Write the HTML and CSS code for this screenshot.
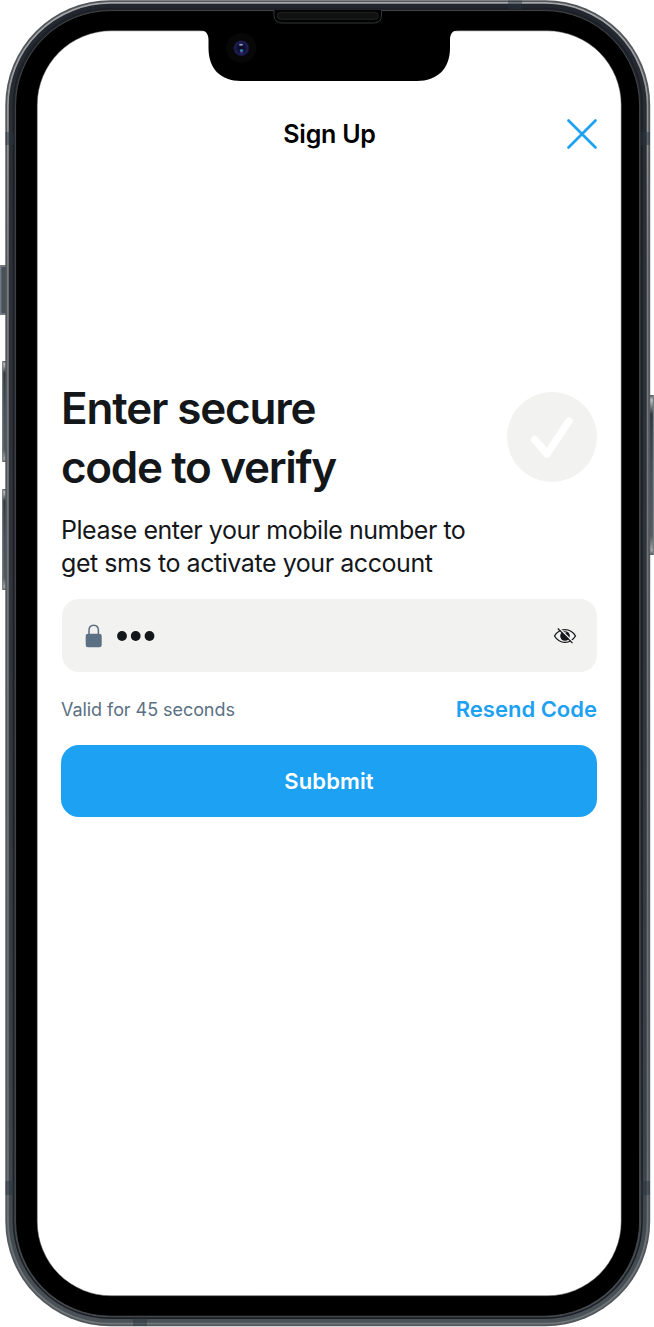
FILE: index.html
```html
<!DOCTYPE html>
<html lang="en">
<head>
<meta charset="utf-8">
<title>Sign Up</title>
<link rel="stylesheet" href="styles.css">
</head>
<body>
<div class="phone">
  <svg class="frame" width="654" height="1327" viewBox="0 0 654 1327" aria-hidden="true">
    <defs>
      <linearGradient id="metal" x1="0" y1="0" x2="0" y2="1">
        <stop offset="0" stop-color="#22262f"/><stop offset=".1" stop-color="#292e35"/><stop offset=".5" stop-color="#30343b"/><stop offset=".88" stop-color="#3c4349"/><stop offset="1" stop-color="#4b5358"/>
      </linearGradient>
      <linearGradient id="shine" x1="0" y1="0" x2="0" y2="1">
        <stop offset="0" stop-color="#a4a8a9"/><stop offset=".1" stop-color="#8f9395"/><stop offset=".2" stop-color="#777b80"/><stop offset=".85" stop-color="#666d73"/><stop offset="1" stop-color="#70777b"/>
      </linearGradient>
      <linearGradient id="key" x1="0" y1="0" x2="0" y2="1">
        <stop offset="0" stop-color="#56595c"/><stop offset=".03" stop-color="#c2c4c5"/><stop offset=".12" stop-color="#30363d"/><stop offset=".5" stop-color="#46515c"/><stop offset=".88" stop-color="#55595e"/><stop offset=".97" stop-color="#a3a5a7"/><stop offset="1" stop-color="#56595c"/>
      </linearGradient>
      <radialGradient id="lens">
        <stop offset="0" stop-color="#090a20"/><stop offset=".55" stop-color="#11133a"/><stop offset=".78" stop-color="#20205a"/><stop offset="1" stop-color="#08080c"/>
      </radialGradient>
    </defs>
    <g>
      <rect x="0" y="265" width="7" height="50" rx="1" fill="#4b5057"/>
      <path d="M.7 266v48" stroke="#6d7a8a" stroke-width="1.4"/>
      <path d="M1 266h5M1 314h5" stroke="#9b9fa2"/>
      <rect x="2" y="361" width="5" height="101" rx="1" fill="url(#key)"/>
      <path d="M2.7 363v97" stroke="#777f85" stroke-width="1.2"/>
      <rect x="2" y="489" width="5" height="101" rx="1" fill="url(#key)"/>
      <path d="M2.7 491v97" stroke="#777f85" stroke-width="1.2"/>
      <rect x="649" y="395" width="5" height="160" rx="1" fill="url(#key)"/>
      <path d="M653.4 397v156" stroke="#777f85" stroke-width="1.2"/>
    </g>
    <rect x="5.3" y=".3" width="644.9" height="1326" rx="105" fill="#53575b"/>
    <rect x="7" y="2" width="641.5" height="1322.6" rx="103.3" fill="url(#metal)"/>
    <rect x="7.9" y="2.9" width="639.7" height="1320.8" rx="102.4" fill="none" stroke="url(#shine)" stroke-width="1.8"/>
    <rect x="13.5" y="8.5" width="628.5" height="1309.6" rx="96.8" fill="none" stroke="#1c2026" stroke-width="1.6"/>
    <rect x="15.6" y="10.6" width="624" height="1305.6" rx="94.7" fill="#000" stroke="#474a4c" stroke-width=".9"/>
    <g fill="#27323c" fill-opacity=".45">
      <rect x="5.5" y="132" width="9" height="13"/>
      <rect x="641" y="132" width="9" height="13"/>
      <rect x="5.5" y="1181" width="9" height="14"/>
      <rect x="641" y="1181" width="9" height="14"/>
      <rect x="508" y=".5" width="14" height="8.5"/>
      <rect x="133" y="1318" width="14" height="8"/>
    </g>
    <rect x="37.2" y="30.8" width="584" height="1265" rx="74" fill="#fff" stroke="#555" stroke-width=".5"/>
    <path d="M199 30C206 30 208.5 34 208.5 40V48C208.5 69 221 81 241 81H417C437 81 450 69 450 48V40C450 34 452.500 30 459 30Z" fill="#000"/>
    <path d="M274 10v5q0 8 8 8h91.500q8 0 8-8v-5" fill="#020202" stroke="#333636" stroke-width="1"/>
    <rect x="277.300" y="12.300" width="101" height="7" rx="3.500" fill="#101111" stroke="#292b2b" stroke-width=".8"/>
    <circle cx="241.300" cy="48" r="15" fill="#070708"/>
    <circle cx="241.300" cy="48.200" r="8.300" fill="url(#lens)"/>
    <ellipse cx="241" cy="44.700" rx="2" ry="1" fill="#9999bf"/>
    <ellipse cx="241.500" cy="50.500" rx="1.700" ry="1.500" fill="#367da5"/>
    <ellipse cx="241.500" cy="52.700" rx="1.600" ry=".8" fill="#5b2487"/>
  </svg>

  <main class="screen">
    <header class="topbar">
      <h1 class="title">Sign Up</h1>
      <svg class="close" width="32" height="32" viewBox="0 0 32 32"><path d="M2.500 2.500l27 27M29.500 2.500l-27 27"/></svg>
    </header>
    <section class="intro">
      <h2 class="heading">Enter secure<br><span class="heading-end">code to verify</span></h2>
      <svg class="badge" width="90" height="90" viewBox="0 0 90 90"><circle cx="45" cy="45" r="45"/><path d="M27.500 47.500L40 62L62 29"/></svg>
    </section>
    <p class="lead"><span class="lead-first">Please enter your mobile number to</span><br>get sms to activate your account</p>
    <div class="field">
      <svg class="lock" width="18" height="24" viewBox="0 0 18 24"><path d="M4 11V6.500C4 3 6 1.200 8.700 1.200s4.700 1.800 4.700 5.300V11" fill="none" stroke="#5b7083" stroke-width="1.500"/><rect x=".7" y="9.700" width="16" height="13.500" rx="2.300" fill="#5b7083"/></svg>
      <svg class="dots" width="38" height="10" viewBox="0 0 38 10"><circle cx="5" cy="5" r="4.900"/><circle cx="18.700" cy="5" r="4.900"/><circle cx="32.500" cy="5" r="4.900"/></svg>
      <svg class="eye" width="24" height="18" viewBox="0 0 24 18">
        <path d="M1.500 9C4 5 7.600 2.700 12 2.700S20 5 22.500 9C20 13.100 16.400 15.400 12 15.400S4 13.100 1.500 9Z" fill="none" stroke="#14171a" stroke-width="1.300"/>
        <circle cx="12" cy="9" r="4.800" fill="#14171a"/>
        <path d="M10 6.500q1.500-1.500 3.200-.7" fill="none" stroke="#f2f2f0" stroke-width=".8"/>
        <path d="M6 1L20.500 15.500" stroke="#f2f2f0" stroke-width="1.500"/>
        <path d="M4.800 1.500L19.500 16.200" stroke="#14171a" stroke-width="1.200"/>
      </svg>
    </div>
    <div class="meta"><span class="valid">Valid for 45 seconds</span><a class="resend">Resend Code</a></div>
    <button class="submit" type="button"><span>Subbmit</span></button>
  </main>
</div>
</body>
</html>
```

FILE: styles.css
```css
* { box-sizing: border-box; }
body { margin: 0; background: #fff; font-family: Inter, "Liberation Sans", sans-serif; color: #14171a; }
.phone { position: relative; width: 654px; height: 1327px; overflow: hidden; }
.frame { position: absolute; left: 0; top: 0; }
.screen { position: relative; display: flex; flex-direction: column; padding: 118px 57px 0 61px; }
.topbar { display: grid; grid-template-columns: 32px 1fr 32px; align-items: center; height: 32px; margin-right: -1px; }
.title { grid-column: 2; margin: 0; text-align: center; font-size: 25px; line-height: 32px; font-weight: 600; letter-spacing: -.25px; color: #000; }
.close { fill: none; stroke: #1da1f2; stroke-width: 2.7; stroke-linecap: round; }
.intro { display: flex; justify-content: space-between; align-items: flex-start; margin-top: 229px; }
.heading { margin: 0; font-size: 44px; line-height: 58.500px; font-weight: 600; letter-spacing: -1.17px; white-space: nowrap; }
.heading-end { letter-spacing: -1.33px; }
.badge { margin-top: 13px; fill: #f2f2f0; }
.badge path { fill: none; stroke: #fff; stroke-width: 7.500; stroke-linecap: round; stroke-linejoin: round; }
.lead { margin: 18px 0 0; font-size: 25px; line-height: 33px; letter-spacing: -.44px; white-space: nowrap; }
.lead-first { letter-spacing: -.47px; }
.field { display: flex; align-items: center; height: 73px; margin: 19px 0 0 1px; padding: 0 20px 0 23px; border-radius: 17px; background: #f2f2f0; }
.dots { margin-left: 14px; fill: #14171a; }
.eye { margin-left: auto; }
.meta { display: flex; justify-content: space-between; align-items: center; height: 32px; margin-top: 21px; white-space: nowrap; }
.valid { font-size: 18px; letter-spacing: -.06px; color: #5b7083; }
.resend { font-size: 22px; font-weight: 600; color: #1da1f2; }
.submit { height: 72px; margin-top: 20px; border: 0; border-radius: 18px; background: #1da1f2; color: #fff; font: 600 22px/28px Inter, "Liberation Sans", sans-serif; letter-spacing: .1px; }
```
